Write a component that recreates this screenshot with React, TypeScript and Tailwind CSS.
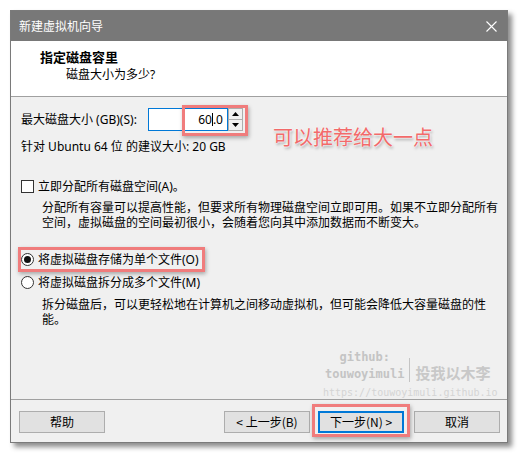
import React from "react";

const F = { fontFamily: '"Noto Sans","Noto Sans CJK SC",sans-serif' };

function Btn({ children, primary }: { children: React.ReactNode; primary?: boolean }) {
  return (
    <div
      className={
        "w-[86px] h-[22px] flex items-center justify-center text-[12px] leading-none text-black bg-[#e1e1e1] " +
        (primary ? "border-2 border-[#0078d7]" : "border border-[#adadad]")
      }
    >
      {children}
    </div>
  );
}

export default function App() {
  return (
    <div className="w-[520px] h-[454px] bg-white relative overflow-hidden" style={F}>
      <div className="absolute left-[10px] top-[10px] w-[498px] h-[433px] border border-[#7a7a7a] bg-[#f0f0f0] flex flex-col shadow-[4px_4px_5px_rgba(0,0,0,0.45)]">
        {/* Title bar */}
        <div className="h-[30px] bg-[#787878] flex items-center justify-between pl-[8px] pr-[10px]">
          <span className="text-white text-[12px] leading-none" style={{ fontFamily: '"Noto Sans CJK SC",sans-serif' }}>新建虚拟机向导</span>
          <svg width="11" height="11" viewBox="0 0 11 11">
            <path d="M0.5 0.5 L10.5 10.5 M10.5 0.5 L0.5 10.5" stroke="#fff" strokeWidth="1.1" />
          </svg>
        </div>
        {/* Header */}
        <div className="h-[56px] bg-white border-b border-[#a0a0a0] pt-[7px] text-black">
          <div className="pl-[29px] h-[18px] leading-[18px] text-[13px] font-bold" style={{ fontFamily: '"Noto Sans CJK SC",sans-serif' }}>指定磁盘容里</div>
          <div className="pl-[55px] h-[18px] leading-[18px] text-[12px]">磁盘大小为多少?</div>
        </div>
        {/* Body */}
        <div className="flex-1 flex flex-col px-[10px] text-[12px] text-black">
          <div className="mt-[11px] h-[23px] flex items-center">
            <span className="w-[127px] leading-[15px]">最大磁盘大小 (GB)(S):</span>
            <div className="w-[80px] h-[23px] border border-[#0078d7] bg-white flex items-center justify-end pr-[4px] leading-none">
              <span>60</span>
              <span className="inline-block w-px h-[13px] bg-black"></span>
              <span>.0</span>
            </div>
            <div className="w-[15px] h-[23px] flex flex-col border border-[#adadad] bg-[#f0f0f0]">
              <div className="flex-1 flex items-center justify-center border-b border-[#adadad]">
                <svg width="7" height="4" viewBox="0 0 7 4"><path d="M0 4 L3.5 0 L7 4 Z" fill="#000" /></svg>
              </div>
              <div className="flex-1 flex items-center justify-center">
                <svg width="7" height="4" viewBox="0 0 7 4"><path d="M0 0 L3.5 4 L7 0 Z" fill="#000" /></svg>
              </div>
            </div>
          </div>
          <div className="mt-[8px] h-[15px] leading-[15px]">针对 Ubuntu 64 位 的建议大小: 20 GB</div>

          <div className="mt-[25px] h-[14px] flex items-center">
            <div className="w-[13px] h-[13px] border border-[#333] bg-white"></div>
            <span className="ml-[4px] leading-[15px]">立即分配所有磁盘空间(A)。</span>
          </div>
          <div className="mt-[6px] pl-[21px] leading-[15px] whitespace-nowrap" style={{ fontFamily: '"Noto Sans CJK SC",sans-serif' }}>
            <div>分配所有容量可以提高性能，但要求所有物理磁盘空间立即可用。如果不立即分配所有</div>
            <div>空间，虚拟磁盘的空间最初很小，会随着您向其中添加数据而不断变大。</div>
          </div>

          <div className="mt-[22px] h-[16px] flex items-center">
            <div className="w-[13px] h-[13px] rounded-full border border-[#333] bg-white flex items-center justify-center">
              <div className="w-[7px] h-[7px] rounded-full bg-[#111]"></div>
            </div>
            <span className="ml-[4px] leading-[15px]">将虚拟磁盘存储为单个文件(O)</span>
          </div>
          <div className="mt-[7px] h-[16px] flex items-center">
            <div className="w-[13px] h-[13px] rounded-full border border-[#333] bg-white"></div>
            <span className="ml-[4px] leading-[15px]">将虚拟磁盘拆分成多个文件(M)</span>
          </div>
          <div className="mt-[6px] pl-[21px] leading-[15px] whitespace-nowrap" style={{ fontFamily: '"Noto Sans CJK SC",sans-serif' }}>
            <div>拆分磁盘后，可以更轻松地在计算机之间移动虚拟机，但可能会降低大容量磁盘的性</div>
            <div>能。</div>
          </div>
          <div className="flex-1"></div>
        </div>
        {/* Footer */}
        <div className="border-t border-[#a0a0a0] pt-[11px] pb-[9px] pl-[8px] pr-[7px] flex items-center" style={{ fontFamily: '"Noto Sans CJK SC",sans-serif' }}>
          <Btn>帮助</Btn>
          <div className="flex-1"></div>
          <Btn>&lt; 上一步(B)</Btn>
          <div className="w-[8px]"></div>
          <Btn primary>下一步(N) &gt;</Btn>
          <div className="w-[10px]"></div>
          <Btn>取消</Btn>
        </div>

        {/* Watermark */}
        <div className="absolute left-[314px] top-[338px] flex flex-col pointer-events-none">
          <div className="flex items-center">
            <div className="flex flex-col items-center text-[12px] leading-[17px] text-[#c4c4c4] font-bold" style={{ fontFamily: '"DejaVu Sans Mono",monospace' }}>
              <span>github:</span>
              <span>touwoyimuli</span>
            </div>
            <div className="ml-[5px] w-px h-[24px] bg-[#c4c4c4] mt-[8px]"></div>
            <div className="ml-[5px] mt-[14px] text-[15px] leading-[18px] font-bold text-[#c8c8c8]" style={{ fontFamily: '"Noto Sans CJK SC",serif' }}>投我以木李</div>
          </div>
          <div className="mt-[3px] -ml-[2px] text-[10px] leading-[14px] text-[#d4d4d4]" style={{ fontFamily: '"DejaVu Sans Mono",monospace' }}>https://touwoyimuli.github.io</div>
        </div>

        {/* Annotation */}
        <div
          className="absolute left-[262px] top-[114px] text-[20px] leading-[24px] text-[#f26a6a] [text-shadow:0_0_2px_#fff,0_0_2px_#fff,1px_2px_3px_rgba(0,0,0,0.35)]"
          style={{ fontFamily: '"Noto Sans CJK SC",sans-serif' }}
        >
          可以推荐给大一点
        </div>

        {/* Red highlight boxes */}
        <div className="absolute left-[171px] top-[94px] w-[66px] h-[31px] border-[3px] border-[#f07c7c] shadow-[1px_2px_4px_rgba(0,0,0,0.3)]"></div>
        <div className="absolute left-[7px] top-[236px] w-[187px] h-[25px] border-[3px] border-[#f07c7c] shadow-[1px_2px_4px_rgba(0,0,0,0.3)]"></div>
        <div className="absolute left-[301px] top-[393px] w-[98px] h-[33px] border-[3px] border-[#f07c7c] shadow-[1px_2px_4px_rgba(0,0,0,0.3)]"></div>
      </div>
    </div>
  );
}
